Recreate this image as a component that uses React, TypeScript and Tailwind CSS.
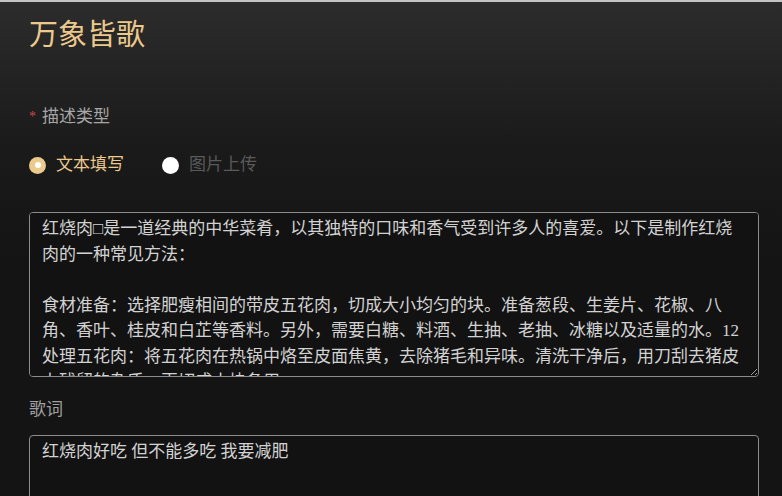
import { useState } from "react"

const recipe =
  "红烧肉□是一道经典的中华菜肴，以其独特的口味和香气受到许多人的喜爱。以下是制作红烧肉的一种常见方法：\n\n" +
  "食材准备：选择肥瘦相间的带皮五花肉，切成大小均匀的块。准备葱段、生姜片、花椒、八角、香叶、桂皮和白芷等香料。另外，需要白糖、料酒、生抽、老抽、冰糖以及适量的水。12\n" +
  "处理五花肉：将五花肉在热锅中烙至皮面焦黄，去除猪毛和异味。清洗干净后，用刀刮去猪皮\n" +
  "上残留的杂质，再切成小块备用。"

const fontStack = "font-['Liberation_Serif','Noto_Sans_CJK_SC',serif]"

const Radio = ({ checked, label, onClick }) => {
  return (
    <button type="button" onClick={onClick} className="flex items-center gap-[10px] cursor-pointer">
      {checked ? (
        <span className="w-[17px] h-[17px] rounded-full bg-[#ecc98c] flex items-center justify-center">
          <span className="w-[6px] h-[6px] rounded-full bg-white" />
        </span>
      ) : (
        <span className="w-[17px] h-[17px] rounded-full bg-white" />
      )}
      <span className={`text-[17px] leading-[24px] ${checked ? "text-[#ecc98c]" : "text-[#5a5a5a]"}`}>
        {label}
      </span>
    </button>
  )
}

const App = () => {
  const [mode, setMode] = useState("text")
  const [desc, setDesc] = useState(recipe)
  const [lyrics, setLyrics] = useState("红烧肉好吃 但不能多吃 我要减肥")

  return (
    <div className={`h-screen overflow-hidden bg-[#141414] bg-[linear-gradient(180deg,#2c2c2c_0px,#1a1a1a_150px,#141414_260px)] ${fontStack}`}>
      <div className="h-[2px] bg-[#c4c4c4]" />
      <div className="pl-[29px] pr-[23px]">
        <h1 className="mt-[13px] text-[29px] leading-[40px] text-[#ecc98c]">万象皆歌</h1>

        <div className="mt-[50px] flex items-center text-[17px] leading-[24px] text-[#a6a6a6]">
          <span className="text-[#c8474f] mr-[6px] text-[14px]">*</span>
          描述类型
        </div>

        <div className="mt-[24px] flex items-center gap-[38px]">
          <Radio checked={mode === "text"} label="文本填写" onClick={() => setMode("text")} />
          <Radio checked={mode === "image"} label="图片上传" onClick={() => setMode("image")} />
        </div>

        <textarea
          value={desc}
          onChange={(e) => setDesc(e.target.value)}
          className={`mt-[35px] block w-full h-[165px] rounded-[4px] border border-[#8c8c8c] bg-[#121212] pl-[12px] pr-[14px] pt-[3px] text-[17px] leading-[25.5px] text-[#d2d2d2] outline-none [scrollbar-width:none] [color-scheme:dark] ${fontStack}`}
        />

        <div className="mt-[21px] text-[17px] leading-[24px] text-[#a0a0a0]">歌词</div>

        <textarea
          value={lyrics}
          onChange={(e) => setLyrics(e.target.value)}
          className={`mt-[13px] block w-full h-[165px] rounded-[4px] border border-[#8c8c8c] bg-[#121212] pl-[12px] pr-[14px] pt-[3px] text-[17px] leading-[25.5px] text-[#d2d2d2] outline-none [scrollbar-width:none] [color-scheme:dark] ${fontStack}`}
        />
      </div>
    </div>
  )
}

export default App
